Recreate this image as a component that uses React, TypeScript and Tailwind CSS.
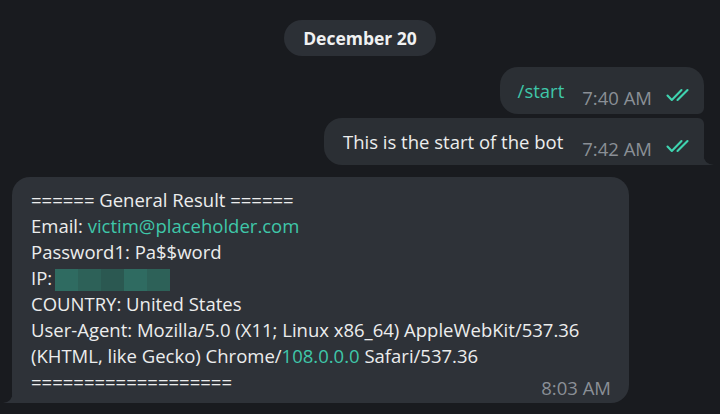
// Telegram-style dark chat: date pill, two outgoing bubbles, one incoming report bubble.
const BODY = "font-['Open_Sans','Noto_Sans',sans-serif]"

function DoubleCheck() {
  return (
    <svg width="26" height="14" viewBox="0 0 26 14" fill="none" className="ml-[14px] mb-[7px]">
      <path d="M1.5 7.5 L5.8 12 L15.5 2" stroke="#3fd4b0" strokeWidth="2.1" strokeLinecap="round" strokeLinejoin="round" />
      <path d="M11.5 12 L21.5 2" stroke="#3fd4b0" strokeWidth="2.1" strokeLinecap="round" />
    </svg>
  )
}

function TailRight() {
  return (
    <svg width="11" height="11" viewBox="0 0 11 11" className="absolute -right-[10px] bottom-0">
      <path d="M0 0 Q0.5 10 11 11 L0 11 Z" fill="#2b2f34" />
    </svg>
  )
}

function TailLeft() {
  return (
    <svg width="10" height="11" viewBox="0 0 10 11" className="absolute -left-[9px] bottom-0">
      <path d="M10 0 Q9.5 10 0 11 L10 11 Z" fill="#2e3238" />
    </svg>
  )
}

function Time({ t }: { t: string }) {
  return <span className="block text-[18.5px] leading-[22px] text-[#8a8f96] whitespace-nowrap">{t}</span>
}

const Line = ({ children }: { children: React.ReactNode }) => (
  <div className="leading-[26px] whitespace-nowrap">{children}</div>
)

export default function App() {
  return (
    <div className={`w-[720px] h-[414px] overflow-hidden bg-[#191b1f] text-[#eceded] ${BODY}`}>
      <div className="flex flex-col">
        {/* date */}
        <div className="flex justify-center pt-[20px]">
          <div className="w-[152px] h-[36px] rounded-full bg-[#2c3036] flex items-center justify-center text-[17.5px] font-bold text-[#f0f1f2]">
            December 20
          </div>
        </div>

        {/* outgoing */}
        <div className="flex flex-col items-end pr-[16px] mt-[11px] gap-[4px] text-[18.5px]">
          <div className="h-[47px] bg-[#2b2f34] rounded-[18px] rounded-br-[6px] pl-[18px] pr-[12px] pt-[11px] pb-[5px] flex items-end">
            <span className="leading-[26px] mb-[5px] text-[#3fc7a9]">/start</span>
            <span className="ml-[18px]"><Time t="7:40 AM" /></span>
            <DoubleCheck />
          </div>
          <div className="relative h-[47px] bg-[#2b2f34] rounded-[18px] rounded-tr-[6px] rounded-br-none pl-[19px] pr-[12px] pt-[11px] pb-[5px] flex items-end">
            <span className="leading-[26px] mb-[5px] whitespace-nowrap">This is the start of the bot</span>
            <span className="ml-[19px]"><Time t="7:42 AM" /></span>
            <DoubleCheck />
            <TailRight />
          </div>
        </div>

        {/* incoming report */}
        <div className="pl-[12px] mt-[12px]">
          <div className="relative w-[617px] bg-[#2e3238] rounded-[18px] rounded-bl-none pl-[19px] pr-[18px] pt-[10px] pb-[8px] text-[18.5px]">
            <Line>====== General Result ======</Line>
            <Line>
              Email: <span className="text-[#3fc7a9]">victim@placeholder.com</span>
            </Line>
            <Line>Password1: Pa$$word</Line>
            <div className="leading-[26px] flex items-center">
              IP:
              <span className="ml-[3px] mt-[3px] flex h-[22px]">
                <span className="w-[23px] bg-[#2f6b61]" />
                <span className="w-[23px] bg-[#2d6158]" />
                <span className="w-[23px] bg-[#2b5851]" />
                <span className="w-[23px] bg-[#2f6b61]" />
                <span className="w-[23px] bg-[#2d6158]" />
              </span>
            </div>
            <Line>COUNTRY: United States</Line>
            <Line>User-Agent: Mozilla/5.0 (X11; Linux x86_64) AppleWebKit/537.36</Line>
            <Line>
              (KHTML, like Gecko) Chrome/<span className="text-[#3fc7a9]">108.0.0.0</span> Safari/537.36
            </Line>
            <div className="flex items-end justify-between leading-[26px]">
              <span>===================</span>
              <span className="-mb-[4px]"><Time t="8:03 AM" /></span>
            </div>
            <TailLeft />
          </div>
        </div>
      </div>
    </div>
  )
}
